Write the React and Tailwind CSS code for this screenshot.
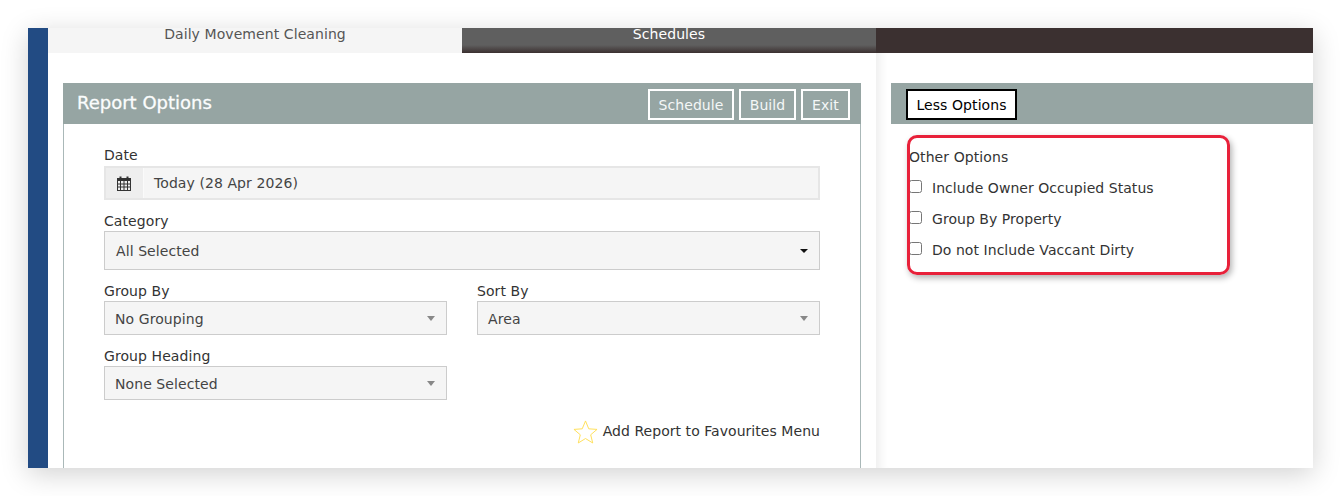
import React from 'react';

const font = { fontFamily: '"DejaVu Sans", Verdana, sans-serif' };

const Caret = ({ dark }) => (
    <span
        className={
            dark
                ? 'w-0 h-0 border-x-[4px] border-x-transparent border-t-[4px] border-t-[#111111]'
                : 'w-0 h-0 border-x-[4px] border-x-transparent border-t-[5px] border-t-[#888888]'
        }
    />
);

const CalendarIcon = () => (
    <svg width="14" height="15" viewBox="0 0 14 15" fill="none" stroke="#333333" className="mr-[2px]">
        <rect x="0.5" y="2.5" width="13" height="12" />
        <path d="M0 3h14v2H0z" fill="#333333" stroke="none" />
        <path d="M3.5 5v9M7 5v9M10.5 5v9M1 8h12M1 11h12" strokeWidth="1" />
        <path d="M3.5 0.5v3M10.5 0.5v3" strokeWidth="2" />
    </svg>
);

const Select = ({ value }) => (
    <div className="flex items-center justify-between border border-[#cccccc] bg-[#f5f5f5] pl-[10px] pr-[11px] h-[34px] text-[#444444]">
        <span className="pt-[2px]">{value}</span>
        <Caret />
    </div>
);

const HeaderButton = ({ children, className }) => (
    <button className={`h-[31px] pt-[2px] border-2 border-white text-[#f4f7f7] text-[14px] ${className}`}>{children}</button>
);

const Check = ({ label }) => (
    <label className="flex items-center h-[31px] tracking-[0.05px] text-[#333333]">
        <input type="checkbox" className="w-[13px] h-[13px] mr-[10px] -mt-[3px]" />
        {label}
    </label>
);

export default function App() {
    return (
        <div className="h-[496px] p-7 bg-white overflow-hidden text-[14px] leading-[20px] tracking-[0.08px] text-[#333333]" style={font}>
            <div className="flex h-[440px] shadow-[0_6px_26px_rgba(0,0,0,0.18)]">
                <div className="w-5 bg-[#224b83]" />
                <div className="flex-1 flex flex-col bg-white">
                    {/* Tabs */}
                    <div className="flex h-[25px] shrink-0">
                        <div className="w-[414px] bg-[#f5f5f5] text-center text-[#555555]">
                            <div className="leading-[12px]">Daily Movement Cleaning</div>
                        </div>
                        <div className="w-[414px] bg-[linear-gradient(#5f5f5f_0,#5f5f5f_17px,#3b3030_25px)] text-center text-white">
                            <div className="leading-[12px]">Schedules</div>
                        </div>
                        <div className="flex-1 bg-[#3b3030]" />
                    </div>

                    <div className="flex-1 flex min-h-0">
                        {/* Report options */}
                        <div className="w-[828px] shrink-0 pl-[15px] pr-[15px] pt-[30px]">
                            <div className="h-full border-x border-[#aab8b8]">
                                <div className="flex items-center justify-between h-[41px] -mx-px bg-[#96a5a3] pl-[14px] pr-[11px]">
                                    <h2 className="mb-[2px] text-[18px] tracking-normal text-[#fbfdfd] font-medium [-webkit-text-stroke:0.3px_#fbfdfd]">Report Options</h2>
                                    <div className="flex gap-[5px] mt-[1px]">
                                        <HeaderButton className="w-[86px]">Schedule</HeaderButton>
                                        <HeaderButton className="w-[57px]">Build</HeaderButton>
                                        <HeaderButton className="w-[49px]">Exit</HeaderButton>
                                    </div>
                                </div>

                                <div className="px-[40px] pt-[21px]">
                                    <div className="h-[20px]">Date</div>
                                    <div className="flex h-[34px] mt-[1px] border-2 border-[#e6e6e6] bg-[#f5f5f5]">
                                        <div className="w-[38px] flex items-center justify-center bg-[#eeeeee] border-r border-[#fafafa]">
                                            <CalendarIcon />
                                        </div>
                                        <div className="flex-1 flex items-center pl-[10px] text-[#444444]">Today (28 Apr 2026)</div>
                                    </div>

                                    <div className="mt-[11px] h-[20px]">Category</div>
                                    <div className="flex items-center justify-between h-[39px] border border-[#cccccc] bg-[#f5f5f5] pl-[11px] pr-[11px] text-[#444444]">
                                        <span>All Selected</span>
                                        <Caret dark />
                                    </div>

                                    <div className="grid grid-cols-2 gap-x-[30px] mt-[11px]">
                                        <div>
                                            <div className="h-[20px]">Group By</div>
                                            <Select value="No Grouping" />
                                        </div>
                                        <div>
                                            <div className="h-[20px]">Sort By</div>
                                            <Select value="Area" />
                                        </div>
                                        <div className="mt-[11px]">
                                            <div className="h-[20px]">Group Heading</div>
                                            <Select value="None Selected" />
                                        </div>
                                    </div>

                                    <div className="flex items-center justify-end gap-[5px] mt-[19px]">
                                        <svg width="25" height="26" viewBox="0 0 26 26" fill="none" stroke="#ffdf55" strokeWidth="1">
                                            <path d="M13 1.5l3.4 8.2 8.6.6-6.6 5.6 2.1 8.5-7.5-4.6-7.5 4.6 2.1-8.5L1 10.3l8.6-.6z" />
                                        </svg>
                                        <span className="-mt-[3px] tracking-[0.05px]">Add Report to Favourites Menu</span>
                                    </div>
                                </div>
                            </div>
                        </div>

                        {/* Other options */}
                        <div className="flex-1 pl-[15px] pt-[30px] shadow-[inset_12px_0_10px_-8px_rgba(0,0,0,0.07)]">
                            <div className="flex items-center h-[41px] bg-[#96a5a3] pl-[15px]">
                                <button className="h-[31px] w-[111px] pt-[2px] mt-[1px] border-2 border-black bg-white text-black">Less Options</button>
                            </div>
                            <div className="relative pl-[18px] pt-[23px]">
                                <div className="h-[20px] mb-[5px]">Other Options</div>
                                <Check label="Include Owner Occupied Status" />
                                <Check label="Group By Property" />
                                <Check label="Do not Include Vaccant Dirty" />
                                <div className="absolute left-[16px] top-[11px] w-[323px] h-[140px] border-[3px] border-[#e8213a] rounded-[10px] shadow-[2px_3px_6px_rgba(0,0,0,0.3)]" />
                            </div>
                        </div>
                    </div>
                </div>
            </div>
        </div>
    );
}
